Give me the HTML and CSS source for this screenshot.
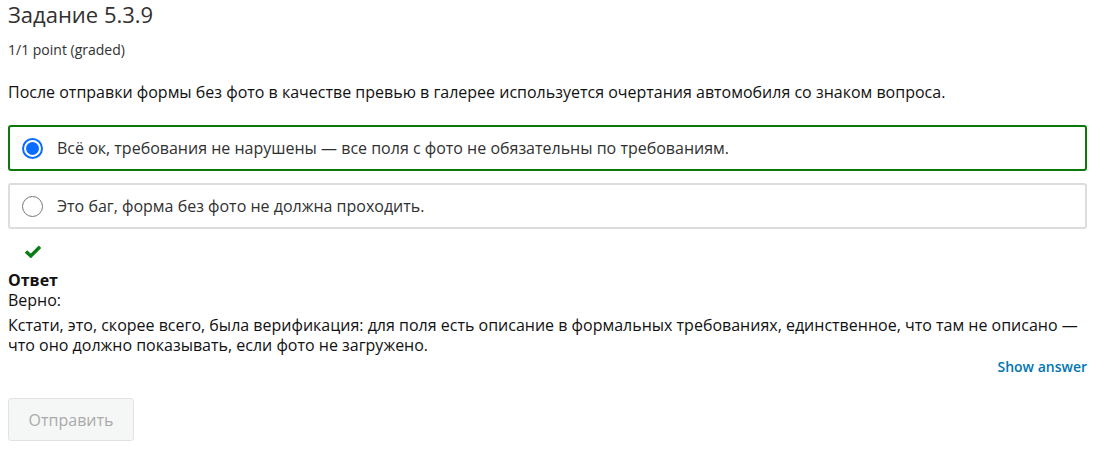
FILE: index.html
```html
<!DOCTYPE html>
<html lang="ru">
<head>
<meta charset="utf-8">
<link rel="stylesheet" href="styles.css">
</head>
<body>
<div class="problem">
  <h3 class="title">Задание 5.3.9</h3>
  <div class="points">1/1 point (graded)</div>
  <p class="question">После отправки формы без фото в качестве превью в галерее используется очертания автомобиля со знаком вопроса.</p>
  <div class="choices">
    <label class="choice correct">
      <span class="radio checked"></span>
      <span class="choice-text">Всё ок, требования не нарушены — все поля с фото не обязательны по требованиям.</span>
    </label>
    <label class="choice">
      <span class="radio"></span>
      <span class="choice-text">Это баг, форма без фото не должна проходить.</span>
    </label>
  </div>
  <div class="status">
    <svg class="check" width="16" height="13" viewBox="0 0 16 13"><path d="M1 6.5 L5.8 11 L15 1.8" fill="none" stroke="#0a7d17" stroke-width="3.4"/></svg>
  </div>
  <div class="answer">
    <div class="answer-label">Ответ</div>
    <div>Верно:</div>
    <div class="explanation">Кстати, это, скорее всего, была верификация: для поля есть описание в формальных требованиях, единственное, что там не описано — что оно должно показывать, если фото не загружено.</div>
  </div>
  <div class="actions-row">
    <a class="show-answer">Show answer</a>
  </div>
  <button class="submit" disabled>Отправить</button>
</div>
</body>
</html>
```

FILE: styles.css
```css
* { box-sizing: border-box; }
body {
  margin: 0;
  font-family: "Open Sans", "Noto Sans", sans-serif;
  color: #313131;
  background: #fff;
}
.problem {
  padding: 0 22px 0 8px;
}
.title {
  margin: 0;
  font-size: 22px;
  font-weight: 400;
  line-height: 28px;
  color: #313131;
}
.points {
  margin-top: 12px;
  font-size: 14px;
  line-height: 20px;
  color: #313131;
}
.question {
  margin: 20px 0 0;
  font-size: 16px;
  line-height: 24px;
  color: #111;
}
.choices {
  margin-top: 21px;
  display: flex;
  flex-direction: column;
  gap: 12px;
}
.choice {
  display: flex;
  align-items: center;
  height: 46px;
  padding: 0 12px;
  border: 2px solid #ddd;
  border-radius: 3px;
  font-size: 16px;
  color: #313131;
}
.choice.correct {
  border-color: #0b7a0b;
}
.radio {
  width: 21px;
  height: 21px;
  border-radius: 50%;
  border: 1px solid #767676;
  margin-right: 14px;
  flex: none;
  position: relative;
  background: #fff;
}
.radio.checked {
  border: 2px solid #0a6cff;
}
.radio.checked::after {
  content: "";
  position: absolute;
  left: 2px;
  top: 2px;
  width: 13px;
  height: 13px;
  border-radius: 50%;
  background: #0a6cff;
}
.status {
  margin-top: 16px;
  padding-left: 17px;
  height: 16px;
}
.check { display: block; }
.answer {
  margin-top: 9px;
  font-size: 16px;
  line-height: 20px;
  color: #111;
}
.answer-label { font-weight: 700; }
.explanation { margin-top: 5px; }
.actions-row {
  display: flex;
  justify-content: flex-end;
  margin-top: 2px;
}
.show-answer {
  font-size: 14px;
  font-weight: 600;
  color: #0075b4;
  line-height: 20px;
}
.submit {
  margin-top: 21px;
  width: 126px;
  height: 43px;
  background: #f5f7f7;
  border: 1px solid #e1e3e3;
  border-radius: 3px;
  font-family: inherit;
  font-size: 16px;
  color: #aaa;
}
```
